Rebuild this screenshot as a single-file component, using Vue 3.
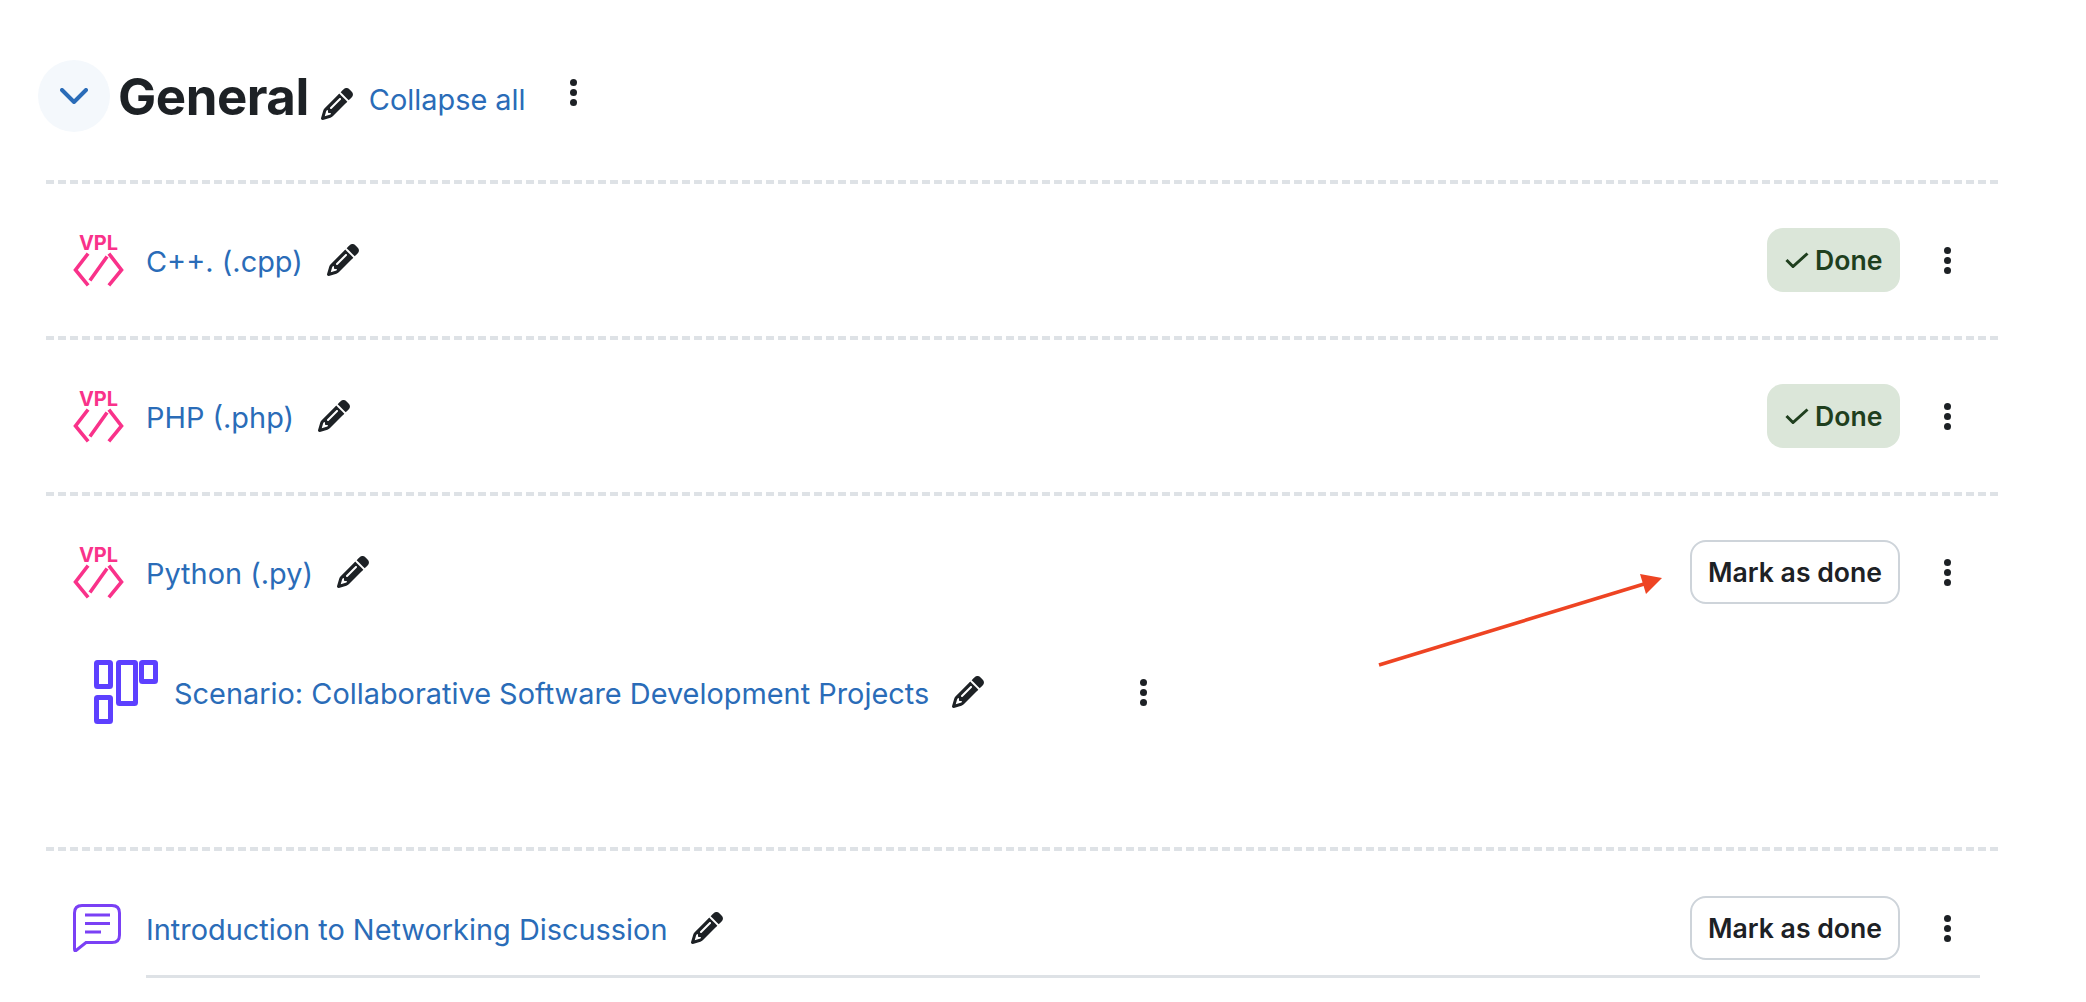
<template>
  <div class="page">
    <div class="section-head">
      <button class="collapse-toggle">
        <svg width="28" height="16" viewBox="0 0 28 16">
          <path d="M2 2 L14 14 L26 2" fill="none" stroke="#2a6cb8" stroke-width="4" stroke-linecap="round" stroke-linejoin="round" />
        </svg>
      </button>
      <h2 class="section-title">General</h2>
      <svg class="pencil head-pencil" viewBox="0 0 512 512"><path :d="pencilPath" /></svg>
      <a class="collapse-all">Collapse all</a>
      <div class="kebab head-kebab"><span></span><span></span><span></span></div>
    </div>

    <div class="activities">
      <div v-for="item in activities" :key="item.name" class="activity" :class="item.kind">
        <div class="activity-main">
          <svg v-if="item.kind !== 'forum'" class="vpl-icon" width="51" height="60" viewBox="0 -3 51 60">
            <text x="25.5" y="17" text-anchor="middle" class="vpl-label">VPL</text>
            <g fill="none" stroke="#f9328a" stroke-width="3.6" stroke-linecap="square">
              <path d="M14 22 L2.5 37 L14 51" />
              <path d="M37 22 L48.5 37 L37 51" />
              <path d="M33 25 L18 46" />
            </g>
          </svg>
          <svg v-else class="forum-icon" width="48" height="48" viewBox="0 0 48 48">
            <path d="M9 1.5 H39 Q46.5 1.5 46.5 9 V31 Q46.5 38.5 39 38.5 H13 L3 46.5 Q1.5 47.5 1.5 45 V9 Q1.5 1.5 9 1.5 Z" fill="none" stroke="#7a40f5" stroke-width="3" />
            <path d="M12 11 H37 M12 19.5 H37 M12 28 H28" stroke="#7a40f5" stroke-width="3" />
          </svg>
          <a class="activity-name">{{ item.name }}</a>
          <svg class="pencil" viewBox="0 0 512 512"><path :d="pencilPath" /></svg>
          <div class="spacer"></div>
          <div v-if="item.done" class="done-badge">
            <svg width="24" height="16" viewBox="0 0 24 16">
              <path d="M1.5 8 L8 14.5 L22.5 1.5" fill="none" stroke="#1f3f1e" stroke-width="3" />
            </svg>
            Done
          </div>
          <button v-else class="mark-btn">Mark as done</button>
          <div class="kebab"><span></span><span></span><span></span></div>
        </div>

        <div v-if="item.kind === 'vpl-parent'" class="sub-activity">
          <svg class="kanban-icon" width="64" height="64" viewBox="0 0 64 64">
            <g fill="none" stroke="#5d40ff" stroke-width="5">
              <rect x="2.5" y="2.5" width="14" height="24" rx="1" />
              <rect x="2.5" y="37.5" width="14" height="24" rx="1" />
              <rect x="24.5" y="2.5" width="17" height="41" rx="1" />
              <rect x="47.5" y="2.5" width="14" height="19" rx="1" />
            </g>
          </svg>
          <a class="activity-name">Scenario: Collaborative Software Development Projects</a>
          <svg class="pencil" viewBox="0 0 512 512"><path :d="pencilPath" /></svg>
          <div class="kebab sub-kebab"><span></span><span></span><span></span></div>
        </div>

        <div v-if="item.kind === 'forum'" class="description">
          Compare and contrast the different ways that collaborative software teams share their work with each other across projects and tools today
        </div>
      </div>
    </div>

    <!-- annotation arrow drawn over the page -->
    <svg class="arrow" width="300" height="100" viewBox="0 0 300 100">
      <path d="M3 92 L268 11" stroke="#ee4423" stroke-width="3.6" fill="none" />
      <path d="M286 5 L264 1 L270 21 Z" fill="#ee4423" />
    </svg>
  </div>
</template>

<script setup>
const pencilPath =
  "M410.3 231l11.3-11.3-33.9-33.9-62.1-62.1L291.7 89.8l-11.3 11.3-22.6 22.6L58.6 322.9c-10.4 10.4-18 23.3-22.2 37.4L1 480.7c-2.5 8.4-.2 17.5 6.1 23.7s15.3 8.5 23.7 6.1l120.3-35.4c14.1-4.2 27-11.8 37.4-22.2L387.7 253.7 410.3 231zM160 399.4l-9.1 22.7c-4 3.1-8.5 5.4-13.3 6.9L59.4 452l23-78.1c1.4-4.9 3.8-9.4 6.9-13.3l22.7-9.1v32c0 8.8 7.2 16 16 16h32zM362.7 18.7L348.3 33.2 325.7 55.8 314.3 67.1l33.9 33.9 62.1 62.1 33.9 33.9 11.3-11.3 22.6-22.6 14.5-14.5c25-25 25-65.5 0-90.5L453.3 18.7c-25-25-65.5-25-90.5 0zm-47.4 168l-144 144c-6.2 6.2-16.4 6.2-22.6 0s-6.2-16.4 0-22.6l144-144c6.2-6.2 16.4-6.2 22.6 0s6.2 16.4 0 22.6z";

const activities = [
  { name: "C++. (.cpp)", kind: "vpl", done: true },
  { name: "PHP (.php)", kind: "vpl", done: true },
  { name: "Python (.py)", kind: "vpl-parent", done: false },
  { name: "Introduction to Networking Discussion", kind: "forum", done: false },
];
</script>

<style scoped>
.page {
  position: relative;
  padding: 60px 86px 0 38px;
  color: #1d2125;
  font-family: Inter, "Liberation Sans", sans-serif;
}

.section-head {
  display: flex;
  align-items: center;
  height: 72px;
  margin-bottom: 48px;
}

.collapse-toggle {
  width: 72px;
  height: 72px;
  border: none;
  border-radius: 50%;
  background-color: #f4f8fc;
  display: flex;
  align-items: center;
  justify-content: center;
  padding: 0;
  margin-right: 8px;
  flex-shrink: 0;
}

.section-title {
  margin: 2px 0 0;
  font-size: 51px;
  font-weight: 700;
  line-height: 70px;
  letter-spacing: -0.5px;
}

.pencil {
  width: 32px;
  height: 32px;
  fill: #1d2125;
  margin-left: 24px;
  flex-shrink: 0;
}

.head-pencil {
  margin-left: 12px;
  margin-top: 16px;
}

.collapse-all {
  margin-left: 16px;
  margin-top: 6px;
  font-size: 28.9px;
  color: #2a6cb8;
}

.kebab {
  width: 8px;
  display: flex;
  flex-direction: column;
  gap: 3px;
  flex-shrink: 0;
}

.kebab span {
  width: 7px;
  height: 7px;
  border-radius: 50%;
  background-color: #1d2125;
}

.head-kebab {
  margin-left: 44px;
  margin-bottom: 8px;
}

.activities {
  margin: 0 -2px 0 8px;
}

.activity {
  padding: 44px 50px 44px 27px;
  border-top: 4px solid transparent;
  background-image: repeating-linear-gradient(to right, #dee2e6 0 8px, transparent 8px 12px);
  background-size: 100% 4px;
  background-repeat: no-repeat;
  background-origin: border-box;
  background-clip: border-box;
}

.activity-main {
  display: flex;
  align-items: center;
  height: 64px;
}

.vpl-icon {
  margin-right: 22px;
  flex-shrink: 0;
}

.vpl-label {
  font-family: Inter, sans-serif;
  font-size: 20px;
  font-weight: 700;
  fill: #f9328a;
}

.forum-icon {
  margin-right: 25px;
  flex-shrink: 0;
}

.activity-name {
  font-size: 28.9px;
  padding-top: 2px;
  color: #2a6cb8;
}

.spacer {
  flex: 1;
}

.done-badge {
  display: flex;
  align-items: center;
  gap: 6px;
  width: 133px;
  height: 64px;
  box-sizing: border-box;
  padding-left: 18px;
  border-radius: 16px;
  background-color: #dbe6d9;
  color: #1f3f1e;
  font-size: 26.6px;
  font-weight: 600;
}

.mark-btn {
  width: 210px;
  height: 64px;
  border: 2px solid #ced4da;
  border-radius: 16px;
  background-color: #fff;
  color: #1d2125;
  font-family: inherit;
  font-size: 26.6px;
  font-weight: 600;
  padding: 0;
}

.activity-main .kebab {
  margin-left: 44px;
}

.sub-activity {
  display: flex;
  align-items: center;
  height: 64px;
  margin: 56px 0 79px 21px;
}

.sub-activity .pencil {
  margin-left: 23px;
}

.kanban-icon {
  margin-right: 16px;
  flex-shrink: 0;
}

.sub-kebab {
  margin-left: 156px;
}

.activity.forum {
  padding-bottom: 0;
  padding-top: 45px;
}

.description {
  margin: 15px -28px 0 73px;
  padding: 17px 0 0 28px;
  border-top: 3px solid #dee2e6;
  font-size: 28.9px;
  line-height: 40px;
  white-space: nowrap;
  overflow: hidden;
}

.arrow {
  position: absolute;
  left: 1376px;
  top: 573px;
}
</style>

<style>
html,
body {
  overflow: hidden;
  background-color: #fff;
}
</style>
